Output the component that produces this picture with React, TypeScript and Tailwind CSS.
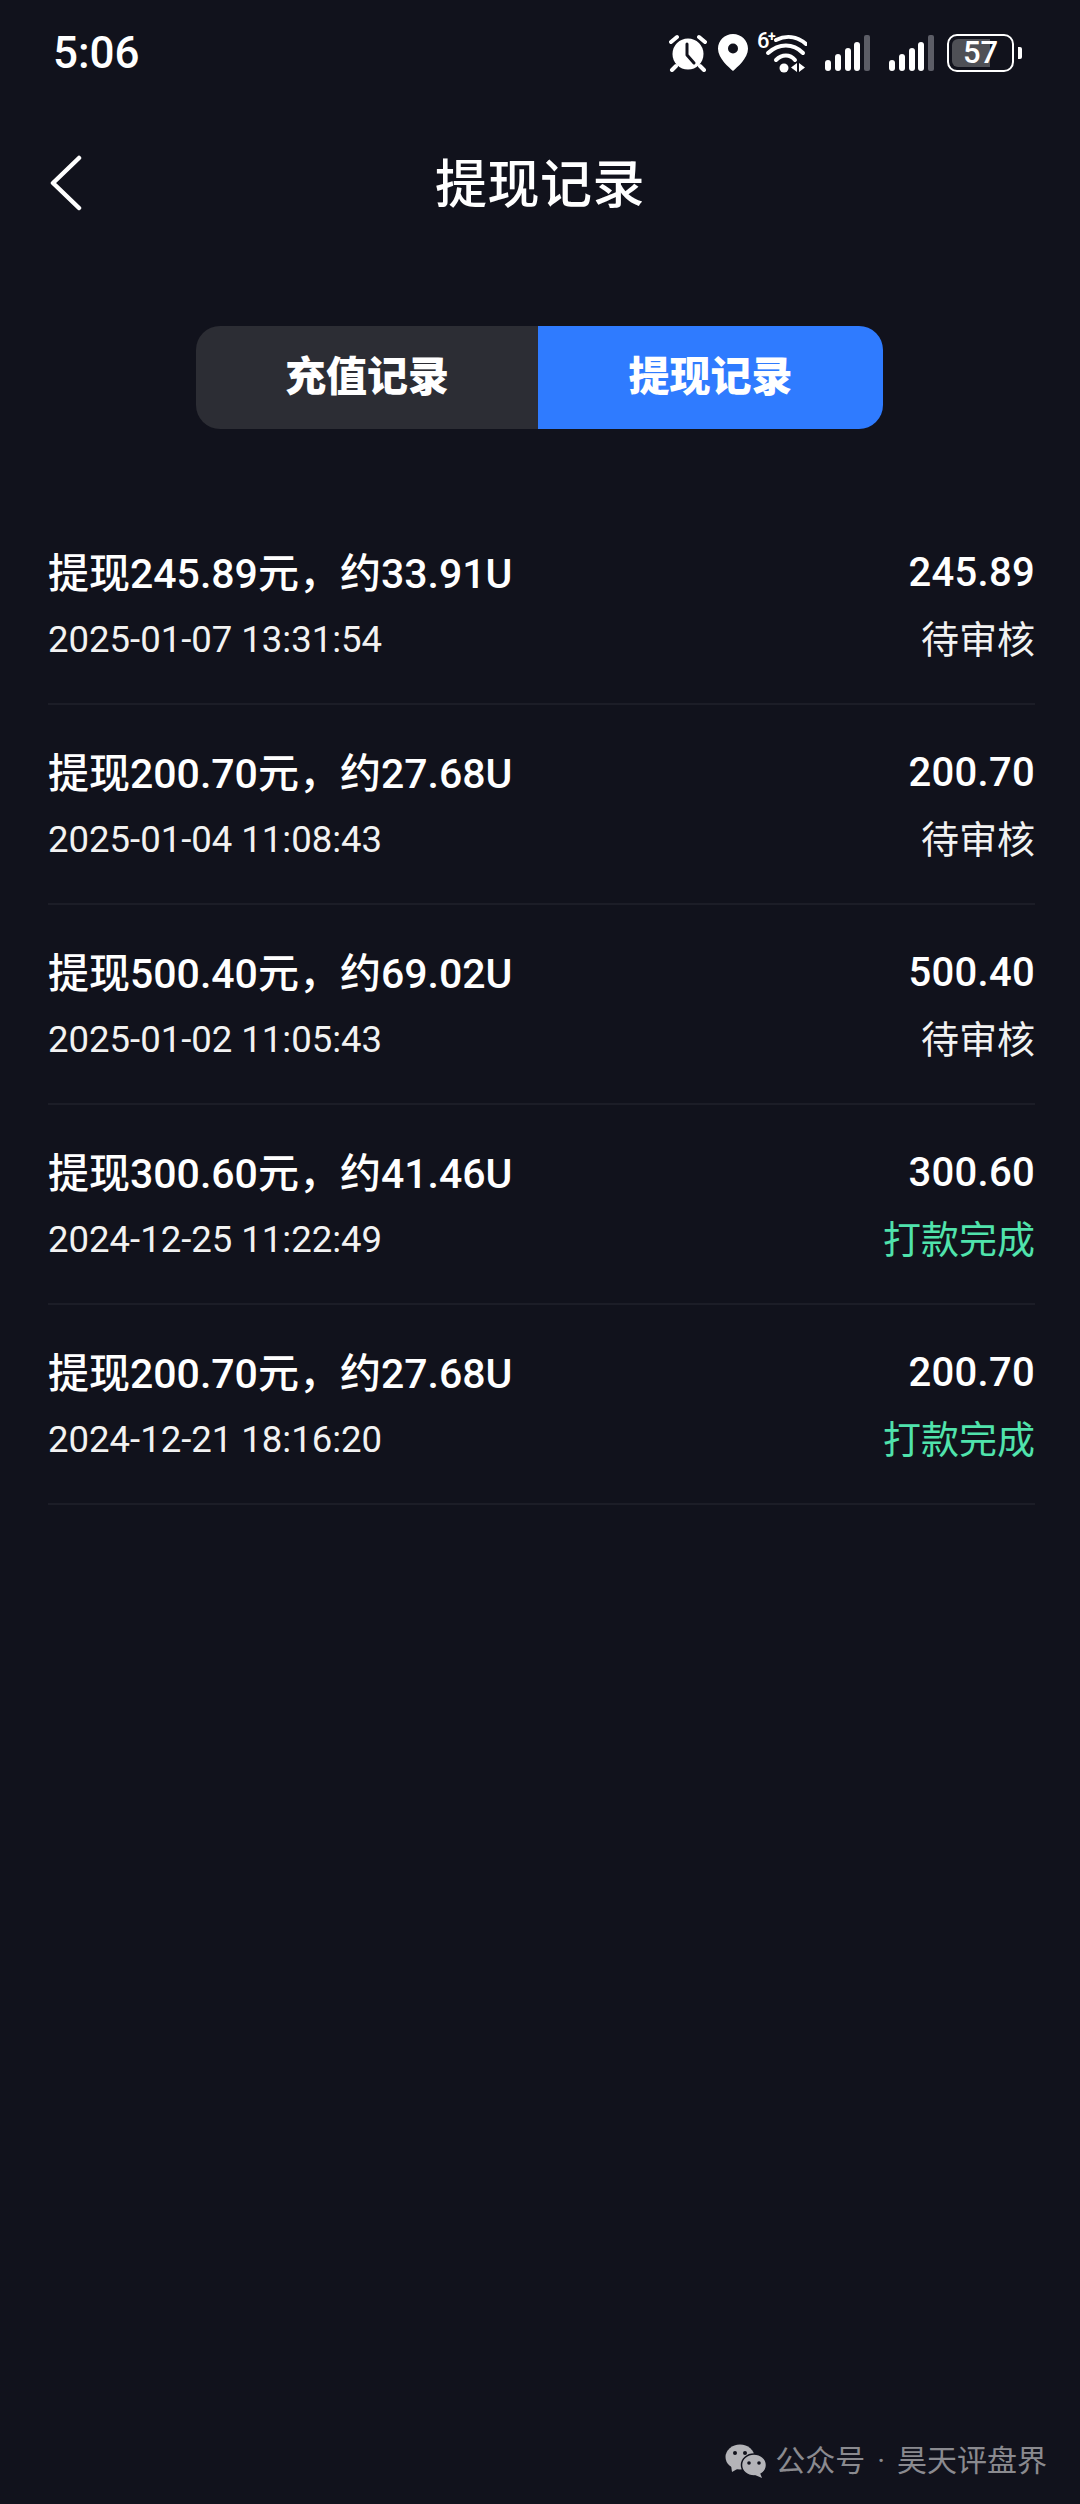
const records = [
  { title: "提现245.89元，约33.91U", time: "2025-01-07 13:31:54", amount: "245.89", status: "待审核", done: false },
  { title: "提现200.70元，约27.68U", time: "2025-01-04 11:08:43", amount: "200.70", status: "待审核", done: false },
  { title: "提现500.40元，约69.02U", time: "2025-01-02 11:05:43", amount: "500.40", status: "待审核", done: false },
  { title: "提现300.60元，约41.46U", time: "2024-12-25 11:22:49", amount: "300.60", status: "打款完成", done: true },
  { title: "提现200.70元，约27.68U", time: "2024-12-21 18:16:20", amount: "200.70", status: "打款完成", done: true },
];

const font = "font-['Roboto','Noto_Sans_CJK_SC',sans-serif]";

function Signal() {
  return (
    <svg width="46" height="36" viewBox="0 0 46 36">
      <rect x="0" y="25" width="6" height="11" rx="3" fill="#fff" />
      <rect x="10" y="19" width="6" height="17" rx="3" fill="#fff" />
      <rect x="20" y="13" width="6" height="23" rx="3" fill="#fff" />
      <rect x="29" y="7" width="6" height="29" rx="3" fill="#fff" />
      <rect x="39" y="0" width="6" height="36" rx="2" fill="#5c5d66" />
    </svg>
  );
}

function StatusBar() {
  return (
    <div className="flex h-[104px] items-center justify-between pl-[53px] pr-[58px] pt-[1px]">
      <span className="text-[44px] leading-none font-medium text-white font-['Roboto',sans-serif]">5:06</span>
      <div className="flex items-center">
        {/* 闹钟 */}
        <svg width="38" height="38" viewBox="0 0 38 38" className="mr-[11px]">
          <circle cx="19" cy="20" r="15.5" fill="#fff" />
          <path d="M18 10v11l7 8" fill="none" stroke="#11121c" strokeWidth="3" strokeLinecap="round" strokeLinejoin="round" />
          <path d="M2 8 8 3M36 8 30 3M7 32l-4 4M31 32l4 4" stroke="#fff" strokeWidth="4" strokeLinecap="round" />
        </svg>
        {/* 定位 */}
        <svg width="30" height="37" viewBox="0 0 30 37" className="mr-[9px]">
          <path d="M15 0C6.7 0 0 6.6 0 14.8 0 24.5 11 33.500 15 37c4-3.500 15-12.500 15-22.200C30 6.600 23.300 0 15 0Z" fill="#fff" />
          <circle cx="15" cy="14.500" r="5" fill="#11121c" />
        </svg>
        {/* wifi 6+ */}
        <div className="relative mr-[18px] h-[40px] w-[50px]">
          <span className="absolute -top-[3px] left-0 text-[22px] leading-[22px] font-medium text-white font-['Roboto',sans-serif]">6</span>
          <span className="absolute -top-[4px] left-[11px] text-[14px] leading-[14px] font-bold text-white font-['Roboto',sans-serif]">+</span>
          <svg width="50" height="40" viewBox="0 0 50 40" className="absolute inset-0">
            <path d="M19 7C29 2 40 3 49 11" fill="none" stroke="#fff" strokeWidth="4" strokeLinecap="round" />
            <path d="M11 20C22 10 36 10 46 20" fill="none" stroke="#fff" strokeWidth="4" strokeLinecap="round" />
            <path d="M19 27C25 21 33 21 38 27" fill="none" stroke="#fff" strokeWidth="4" strokeLinecap="round" />
            <circle cx="27" cy="35" r="4.500" fill="#fff" />
            <path d="M40 30v9l-6-4.500ZM42 30v9l6-4.500Z" fill="#fff" />
          </svg>
        </div>
        <Signal />
        <div className="w-[18px]" />
        <Signal />
        {/* 电池 */}
        <div className="relative ml-[12px] flex h-[38px] w-[67px] items-center rounded-[10px] border-[2px] border-white p-[3px]">
          <div className="h-full w-[38px] rounded-l-[6px] bg-[#4f5056]" />
          <span className="absolute inset-0 flex items-center justify-center text-[31px] leading-none font-medium text-white font-['Roboto',sans-serif]">57</span>
        </div>
        <div className="ml-[4px] h-[12px] w-[4px] rounded-r-[2px] bg-white" />
      </div>
    </div>
  );
}

export default function App() {
  return (
    <div className={`flex h-[2504px] w-[1080px] flex-col overflow-hidden bg-[#11121c] text-white ${font}`}>
      <StatusBar />

      {/* header */}
      <div className="relative mt-[42px] flex h-[74px] items-center justify-center">
        <svg width="32" height="56" viewBox="0 0 32 56" className="absolute left-[50px] top-[9px]">
          <path d="M29 3 3 28l26 25" fill="none" stroke="#fff" strokeWidth="4.500" strokeLinecap="round" strokeLinejoin="round" />
        </svg>
        <h1 className="relative top-[3px] text-[52px] tracking-[0.5px] leading-none font-medium">提现记录</h1>
      </div>

      {/* tabs */}
      <div className="mt-[106px] flex justify-center pr-[1px]">
        <div className="flex h-[103px] w-[687px] overflow-hidden rounded-[24px] text-[41px] font-black">
          <div className="flex w-[342px] items-center justify-center bg-[#2c2d34]">充值记录</div>
          <div className="flex flex-1 items-center justify-center bg-[#2f7bff]">提现记录</div>
        </div>
      </div>

      {/* list */}
      <div className="mt-[76px] pl-[48px] pr-[45px]">
        {records.map((r, i) => (
          <div key={i} className="flex h-[200px] justify-between border-b-2 border-[#1c1d27] pt-[44px]">
            <div>
              <div className="text-[41px] leading-[50px] font-medium">{r.title}</div>
              <div className="mt-[18px] text-[36.5px] leading-[46px] text-[#f2f2f2]">{r.time}</div>
            </div>
            <div className="text-right">
              <div className="text-[40px] leading-[48px] font-medium tracking-[0.3px]">{r.amount}</div>
              <div className={`mt-[20px] text-[38px] leading-[46px] ${r.done ? "text-[#50e3ac]" : "text-[#f2f2f2]"}`}>{r.status}</div>
            </div>
          </div>
        ))}
      </div>

      {/* 公众号 水印 */}
      <div className="mt-auto flex items-center justify-end pr-[33px] pb-[24px] text-[30px] leading-[38px] text-[#8a8a8f]">
        <svg width="42" height="34" viewBox="0 0 42 34" className="mr-[8px]">
          <ellipse cx="15" cy="13" rx="14.500" ry="12.500" fill="#b4b4b8" />
          <path d="M6 21l1 7 7-4Z" fill="#b4b4b8" />
          <ellipse cx="29" cy="21" rx="12.500" ry="11" fill="#b4b4b8" stroke="#11121c" strokeWidth="1.500" />
          <path d="M35 29l2 5-7-3Z" fill="#b4b4b8" />
          <circle cx="10" cy="9" r="2" fill="#11121c" />
          <circle cx="20" cy="9" r="2" fill="#11121c" />
          <circle cx="24" cy="19" r="1.800" fill="#11121c" />
          <circle cx="34" cy="19" r="1.800" fill="#11121c" />
        </svg>
        <span>公众号</span>
        <span className="px-[12px]">·</span>
        <span>昊天评盘界</span>
      </div>
    </div>
  );
}
